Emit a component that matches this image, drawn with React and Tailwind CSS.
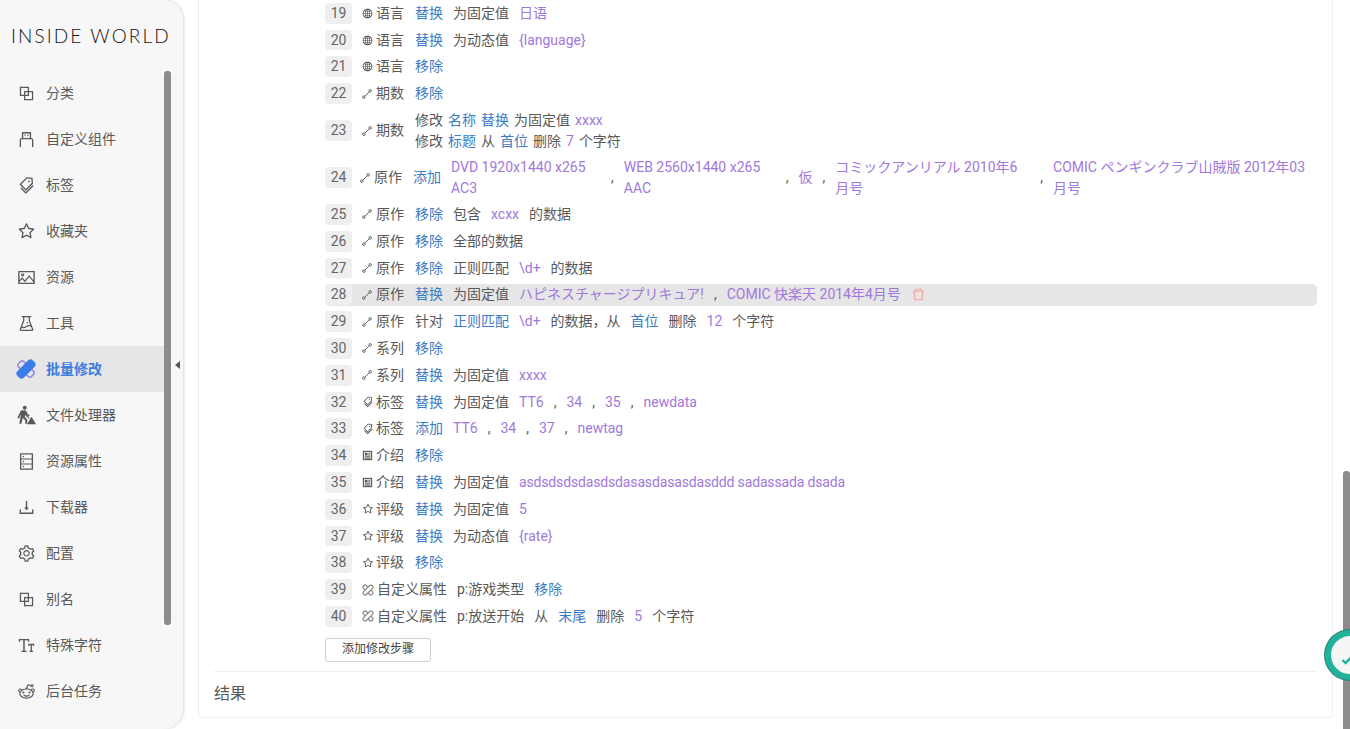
import React from "react";
import { AiOutlineBlock, AiOutlineUsb, AiOutlineTags, AiOutlineStar, AiOutlinePicture, AiOutlineExperiment, AiOutlineDatabase, AiOutlineDownload, AiOutlineSetting, AiOutlineFontSize, AiOutlineReddit, AiOutlineGlobal, AiOutlineDelete } from "react-icons/ai";

const FONT = "font-['Roboto','Noto_Sans_CJK_SC','Noto_Sans',sans-serif]";

function Bandage({ className }) {
  return (
    <svg viewBox="0 0 24 24" className={className}>
      <g transform="rotate(45 12 12)">
        <rect x="7.5" y="1" width="9" height="22" rx="3.4" fill="none" stroke="#9a8fe4" strokeWidth="2" transform="rotate(90 12 12)" />
        <rect x="6.5" y="-1" width="11" height="26" rx="3.8" fill="#3b7de8" />
      </g>
    </svg>
  );
}
function BandageGray({ className }) {
  return (
    <svg viewBox="0 0 24 24" className={className} fill="none" stroke="currentColor" strokeWidth="2.4">
      <g transform="rotate(45 12 12)">
        <rect x="8" y="0" width="8" height="24" rx="3.4" transform="rotate(90 12 12)" />
        <rect x="8" y="0" width="8" height="24" rx="3.4" fill="#fff" />
      </g>
    </svg>
  );
}
function Digger({ className }) {
  return (
    <svg viewBox="0 0 24 24" className={className} fill="currentColor">
      <circle cx="10.5" cy="3.2" r="2.4" />
      <path d="M5.5 7.2 10 6.2c1.2-.2 2 .3 2.5 1.2l1.4 3 2.6 2-1.2 1.5-3-2.1-1-1.5-.8 4 3 3v5.2h-2.4v-4.2l-3-2.6-1.6 6.8H4l2-11.3-2.2 4.8H1.6z" />
      <path d="M7 6 16.4 15.6l-1 .9L6 7z" />
      <path d="M18.6 14 24 23H13.2z" />
    </svg>
  );
}
function LinkIcon({ className }) {
  return (
    <svg viewBox="0 0 12 12" className={className} fill="none" stroke="currentColor" strokeWidth="1.1">
      <circle cx="2.2" cy="9.8" r="1.5" />
      <circle cx="9.8" cy="2.2" r="1.5" />
      <path d="M3.4 8.6 8.6 3.4" />
    </svg>
  );
}
function IntroIcon({ className }) {
  return (
    <svg viewBox="0 0 12 12" className={className}>
      <rect x="1.5" y="1.5" width="9" height="9" fill="#ddd" stroke="currentColor" strokeWidth="1.2" />
      <rect x="3.3" y="3.3" width="2.6" height="2.6" fill="currentColor" />
      <path d="M7 4h1.8M7 5.5h1.8M3.3 7.4h5.5M3.3 8.9h5.5" stroke="currentColor" strokeWidth="0.9" />
    </svg>
  );
}

const menu = [
  [AiOutlineBlock, "分类"],
  [AiOutlineUsb, "自定义组件"],
  [AiOutlineTags, "标签"],
  [AiOutlineStar, "收藏夹"],
  [AiOutlinePicture, "资源"],
  [AiOutlineExperiment, "工具"],
  [null, "批量修改"],
  [Digger, "文件处理器"],
  [AiOutlineDatabase, "资源属性"],
  [AiOutlineDownload, "下载器"],
  [AiOutlineSetting, "配置"],
  [AiOutlineBlock, "别名"],
  [AiOutlineFontSize, "特殊字符"],
  [AiOutlineReddit, "后台任务"],
];

const B = ({ children }) => <span className="text-[#3d7cc4] whitespace-nowrap">{children}</span>;
const P = ({ children }) => <span className="text-[#a178dc] whitespace-nowrap">{children}</span>;
const T = ({ children }) => <span className="whitespace-nowrap">{children}</span>;
const C = () => <span>,</span>;

const Globe = () => <AiOutlineGlobal className="w-[11px] h-[11px] -mr-px shrink-0 text-[#444]" />;
const Link = () => <LinkIcon className="w-[10px] h-[10px] shrink-0 text-[#555]" />;
const Tag = () => <AiOutlineTags className="w-[12px] h-[12px] -mr-[2px] shrink-0 text-[#555]" />;
const Intro = () => <IntroIcon className="w-[11px] h-[11px] -mr-px shrink-0 text-[#555]" />;
const Star = () => <AiOutlineStar className="w-[12px] h-[12px] -mr-[2px] shrink-0 text-[#555]" />;
const Prop = () => <BandageGray className="w-[12px] h-[12px] -mr-px shrink-0 text-[#888]" />;

const Label = ({ icon, text }) => (
  <span className="flex items-center gap-[4px] mr-px shrink-0 whitespace-nowrap">{icon}{text}</span>
);

function Row({ n, icon, label, tall, active, tight, children, after }) {
  return (
    <div className={`flex items-center min-h-[21.8px] rounded-[5px] ${active ? "bg-[#e6e6e6]" : ""} ${tall ? "h-[42px]" : ""}`}>
      <div className="w-[27px] h-[20.8px] shrink-0 flex items-center justify-center rounded-[4px] bg-[#efefef] text-[#666] text-[14px]">{n}</div>
      <div className={`flex items-center ${tight ? "gap-[10px] ml-[8px]" : "gap-[10px] ml-[10px]"}`}>
        <Label icon={icon} text={label} />
        {children}
      </div>
      {after}
    </div>
  );
}

export default function App() {
  return (
    <div className={`${FONT} relative flex h-[729px] w-[1350px] overflow-hidden bg-white text-[14px] leading-[21px] text-[#595959]`}>
      {/* sidebar */}
      <aside className="relative w-[183px] shrink-0 h-full rounded-r-[20px] bg-[#f7f7f7] shadow-[1px_0_3px_rgba(0,0,0,0.16)] overflow-hidden">
        <div className="h-[70px] pl-[11px] pt-[25px] text-[19px] leading-[22px] font-light tracking-[2.1px] text-[#111] font-['Lato','Roboto',sans-serif] whitespace-nowrap">INSIDE WORLD</div>
        <nav className="w-[164px] flex flex-col">
          {menu.map(([Icon, text]) => {
            const on = text === "批量修改";
            return (
              <div key={text} className={`h-[46px] flex items-center pl-[16px] ${on ? "bg-[#e6e6e6]" : ""}`}>
                <span className="w-[20px] h-[20px] flex items-center justify-center shrink-0">
                  {on ? <Bandage className="w-[20px] h-[20px]" /> : <Icon className={Icon === Digger ? "w-[20px] h-[20px]" : "w-[19px] h-[19px]"} />}
                </span>
                <span className={`ml-[10px] whitespace-nowrap ${on ? "font-bold text-[#3b7de0]" : ""}`}>{text}</span>
              </div>
            );
          })}
        </nav>
        <div className="absolute left-[164px] top-[71px] h-[554px] w-[7px] rounded-[3px] bg-[#8c8c8c]" />
      </aside>
      <div className="absolute left-[175px] top-[361px] w-0 h-0 border-y-[4px] border-y-transparent border-r-[5px] border-r-[#555]" />

      {/* main */}
      <main className="flex-1 min-w-0 pl-[15px] pr-[17px] pb-[11px]">
        <section className="h-full border border-t-0 border-[#efefef] rounded-b-[4px] px-[15px] flex flex-col">
          <div className="pl-[111px] pt-[2.4px] flex flex-col gap-[5px]">
            <Row n={19} icon={<Globe />} label="语言"><B>替换</B><T>为固定值</T><P>日语</P></Row>
            <Row n={20} icon={<Globe />} label="语言"><B>替换</B><T>为动态值</T><P>{"{language}"}</P></Row>
            <Row n={21} icon={<Globe />} label="语言"><B>移除</B></Row>
            <Row n={22} icon={<Link />} label="期数"><B>移除</B></Row>
            <Row n={23} tall icon={<Link />} label="期数">
              <div className="flex flex-col">
                <div className="flex gap-[5px]"><T>修改</T><B>名称</B><B>替换</B><T>为固定值</T><P>xxxx</P></div>
                <div className="flex gap-[5px]"><T>修改</T><B>标题</B><T>从</T><B>首位</B><T>删除</T><P>7</P><T>个字符</T></div>
              </div>
            </Row>
            <Row n={24} tall tight icon={<Link />} label="原作">
              <B>添加</B>
              <span className="w-[150px] text-[#a178dc]">DVD 1920x1440 x265 AC3</span><C />
              <span className="w-[152px] text-[#a178dc]">WEB 2560x1440 x265 AAC</span><C />
              <P>仮</P><C />
              <span className="w-[195px] text-[#a178dc]">コミックアンリアル 2010年6月号</span><C />
              <span className="w-[256px] text-[#a178dc]">COMIC ペンギンクラブ山賊版 2012年03月号</span>
            </Row>
            <Row n={25} icon={<Link />} label="原作"><B>移除</B><T>包含</T><P>xcxx</P><T>的数据</T></Row>
            <Row n={26} icon={<Link />} label="原作"><B>移除</B><T>全部的数据</T></Row>
            <Row n={27} icon={<Link />} label="原作"><B>移除</B><T>正则匹配</T><P>\d+</P><T>的数据</T></Row>
            <Row n={28} active icon={<Link />} label="原作" after={<AiOutlineDelete className="ml-[10px] w-[15px] h-[15px] text-[#f3a29c]" />}>
              <B>替换</B><T>为固定值</T><P>ハピネスチャージプリキュア!</P><C /><P>COMIC 快楽天 2014年4月号</P>
            </Row>
            <Row n={29} icon={<Link />} label="原作"><T>针对</T><B>正则匹配</B><P>\d+</P><T>的数据，从</T><B>首位</B><T>删除</T><P>12</P><T>个字符</T></Row>
            <Row n={30} icon={<Link />} label="系列"><B>移除</B></Row>
            <Row n={31} icon={<Link />} label="系列"><B>替换</B><T>为固定值</T><P>xxxx</P></Row>
            <Row n={32} icon={<Tag />} label="标签"><B>替换</B><T>为固定值</T><P>TT6</P><C /><P>34</P><C /><P>35</P><C /><P>newdata</P></Row>
            <Row n={33} icon={<Tag />} label="标签"><B>添加</B><P>TT6</P><C /><P>34</P><C /><P>37</P><C /><P>newtag</P></Row>
            <Row n={34} icon={<Intro />} label="介绍"><B>移除</B></Row>
            <Row n={35} icon={<Intro />} label="介绍"><B>替换</B><T>为固定值</T><span className="text-[#a178dc] whitespace-nowrap tracking-[-0.15px]">asdsdsdsdasdsdasasdasasdasddd sadassada dsada</span></Row>
            <Row n={36} icon={<Star />} label="评级"><B>替换</B><T>为固定值</T><P>5</P></Row>
            <Row n={37} icon={<Star />} label="评级"><B>替换</B><T>为动态值</T><P>{"{rate}"}</P></Row>
            <Row n={38} icon={<Star />} label="评级"><B>移除</B></Row>
            <Row n={39} icon={<Prop />} label="自定义属性"><span className="-ml-px whitespace-nowrap">p:游戏类型</span><B>移除</B></Row>
            <Row n={40} icon={<Prop />} label="自定义属性"><span className="-ml-px whitespace-nowrap">p:放送开始</span><T>从</T><B>末尾</B><T>删除</T><P>5</P><T>个字符</T></Row>
          </div>
          <div className="pl-[111px] mt-[10.6px]">
            <button className="w-[106px] h-[24px] border border-[#d0d0d0] rounded-[3px] bg-white text-[12px] text-[#444]">添加修改步骤</button>
          </div>
          <div className="mt-[9px] border-t border-[#f0f0f0] pt-[10px] text-[16px] leading-[24px]">结果</div>
        </section>
      </main>

      {/* page scrollbar */}
      <div className="absolute right-0 top-[471px] bottom-0 w-[7px] rounded-t-[3px] bg-[#8c8c8c]" />
      {/* floating status */}
      <div className="absolute left-[1325px] top-[630px] w-[50px] h-[50px] rounded-full bg-[#f5f5f5] border-[6px] border-[#21b29c] shadow-[0_0_0_1px_#2f7d78] flex items-center justify-center">
        <svg viewBox="0 0 12 10" className="w-[12px] h-[10px] translate-y-[5px] -translate-x-[3px]"><path d="M1.5 5 4.5 8 10.5 2" fill="none" stroke="#21b29c" strokeWidth="2.4" /></svg>
      </div>
    </div>
  );
}
